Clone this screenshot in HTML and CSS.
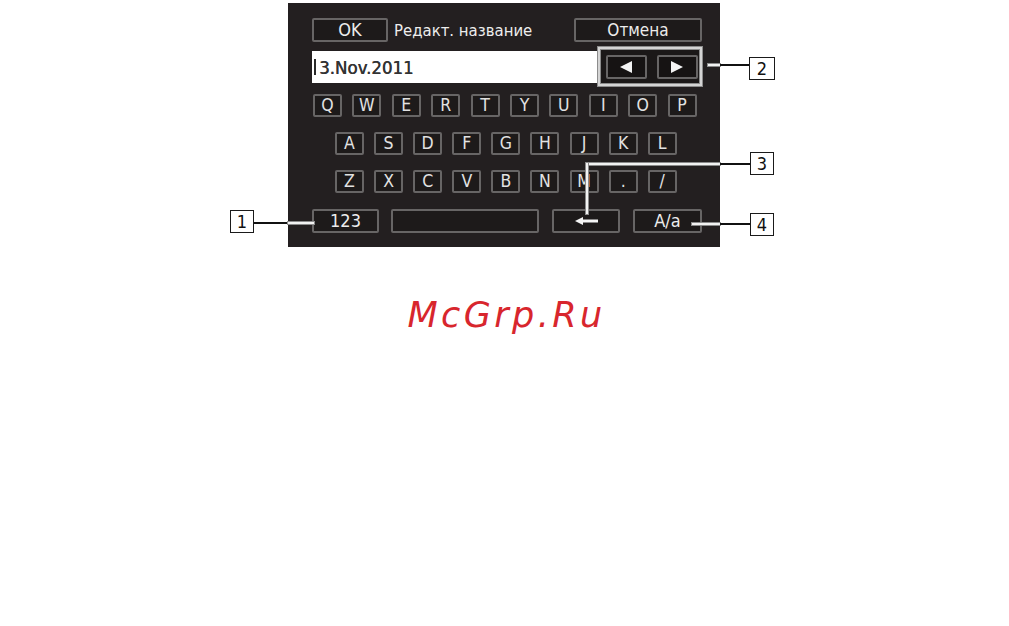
FILE: index.html
```html
<!DOCTYPE html>
<html lang="ru">
<head>
<meta charset="utf-8">
<title>Редакт. название</title>
<link rel="stylesheet" href="styles.css">
</head>
<body>
<div class="stage">
  <div class="panel">
    <div class="topbar">
      <div class="btn ok">OK</div>
      <div class="title">Редакт. название</div>
      <div class="btn cancel">Отмена</div>
    </div>
    <div class="inputrow">
      <div class="field"><span class="cursor"></span>3.Nov.2011</div>
      <div class="arrows">
        <div class="abtn"><svg width="12" height="12" viewBox="0 0 12 12"><polygon points="12,0 12,12 0,6" fill="#f4f4f4"/></svg></div>
        <div class="abtn"><svg width="12" height="12" viewBox="0 0 12 12"><polygon points="0,0 0,12 12,6" fill="#f4f4f4"/></svg></div>
      </div>
    </div>
    <div class="keys row1">
      <div class="key">Q</div><div class="key">W</div><div class="key">E</div><div class="key">R</div><div class="key">T</div><div class="key">Y</div><div class="key">U</div><div class="key">I</div><div class="key">O</div><div class="key">P</div>
    </div>
    <div class="keys row2">
      <div class="key">A</div><div class="key">S</div><div class="key">D</div><div class="key">F</div><div class="key">G</div><div class="key">H</div><div class="key">J</div><div class="key">K</div><div class="key">L</div>
    </div>
    <div class="keys row3">
      <div class="key">Z</div><div class="key">X</div><div class="key">C</div><div class="key">V</div><div class="key">B</div><div class="key">N</div><div class="key">M</div><div class="key">.</div><div class="key">/</div>
    </div>
    <div class="bottomrow">
      <div class="btn num">123</div>
      <div class="btn space"></div>
      <div class="btn back"><svg width="23" height="8" viewBox="0 0 23 8"><polygon points="0,4 8,0 8,2.5 23,2.5 23,5.5 8,5.5 8,8" fill="#f4f4f4"/></svg></div>
      <div class="btn caps">A/a</div>
    </div>
  </div>

  <div class="lead dark l1"></div>
  <div class="lead light l1in"></div>
  <div class="num-box n1">1</div>

  <div class="lead light l2in"></div>
  <div class="lead dark l2"></div>
  <div class="num-box n2">2</div>

  <div class="lead light l3in"></div>
  <div class="lead light l3v"></div>
  <div class="lead dark l3"></div>
  <div class="num-box n3">3</div>

  <div class="lead light l4in"></div>
  <div class="lead dark l4"></div>
  <div class="num-box n4">4</div>
</div>
<div class="brand">McGrp.Ru</div>
</body>
</html>
```

FILE: styles.css
```css
html, body {
  margin: 0;
  padding: 0;
  background: #ffffff;
}

body {
  width: 1009px;
  height: 626px;
  overflow: hidden;
  font-family: "Liberation Sans Narrow", "DejaVu Sans Condensed", "Liberation Sans", sans-serif;
}

.stage {
  position: relative;
  padding-top: 3px;
}

.panel {
  margin-left: 288px;
  width: 432px;
  height: 244px;
  box-sizing: border-box;
  background: #231f20;
  padding: 15px 18px 0 24px;
  display: flex;
  flex-direction: column;
  color: #e6e6e6;
}

.topbar {
  display: flex;
  align-items: center;
  height: 24px;
}

.btn {
  box-sizing: border-box;
  height: 24px;
  border: 2px solid #676565;
  border-radius: 2px;
  background: #1d1a1a;
  color: #ececec;
  display: flex;
  align-items: center;
  justify-content: center;
  font-size: 17px;
  line-height: 1;
}

.ok {
  width: 76px;
  font-size: 18px;
}

.title {
  flex: 1;
  margin-left: 6px;
  font-size: 16.6px;
  color: #ededed;
  white-space: nowrap;
}

.cancel {
  width: 128px;
}

.inputrow {
  display: flex;
  align-items: flex-start;
  margin-top: 5px;
  height: 39px;
}

.field {
  margin-top: 4px;
  width: 290px;
  height: 32px;
  box-sizing: border-box;
  background: #ffffff;
  display: flex;
  align-items: center;
  padding-left: 2px;
  font-size: 18.5px;
  font-weight: normal;
  color: #333333;
  text-shadow: 0.4px 0 0 #333333;
}

.cursor {
  display: inline-block;
  width: 2px;
  height: 16px;
  background: #2a2a2a;
  margin-right: 3px;
}

.arrows {
  box-sizing: border-box;
  width: 106px;
  height: 39px;
  border: 2px solid #d4d4d4;
  box-shadow: 0 0 0 1px #8c8c8c, inset 0 0 0 1px #8c8c8c;
  background: #1b1818;
  display: flex;
  align-items: center;
  gap: 10px;
  padding-left: 6px;
}

.abtn {
  box-sizing: border-box;
  width: 41px;
  height: 24px;
  border: 2px solid #676565;
  border-radius: 2px;
  background: #161313;
  display: flex;
  align-items: center;
  justify-content: center;
}

.keys {
  display: flex;
  height: 23px;
}

.row1 {
  margin-top: 8px;
  margin-left: 1px;
  gap: 10.4px;
}

.row2 {
  margin-top: 15px;
  margin-left: 23px;
  gap: 10.1px;
}

.row3 {
  margin-top: 15px;
  margin-left: 23px;
  gap: 10.1px;
}

.key {
  box-sizing: border-box;
  width: 29px;
  height: 23px;
  border: 2px solid #676565;
  border-radius: 2px;
  background: #1d1a1a;
  color: #e2e2e2;
  display: flex;
  align-items: center;
  justify-content: center;
  font-size: 17.5px;
  line-height: 1;
}

.bottomrow {
  display: flex;
  margin-top: 16px;
  height: 24px;
}

.num {
  width: 67px;
  font-size: 18px;
}

.space {
  width: 148px;
  margin-left: 12px;
}

.back {
  width: 68px;
  margin-left: 13px;
}

.caps {
  width: 69px;
  margin-left: 13px;
  font-size: 18px;
}

/* callout annotations */
.lead {
  position: absolute;
}

.lead.dark {
  background: #111111;
  height: 2px;
}

.lead.light {
  background: #f2f2f2;
  box-shadow: 0 0 0 1px #8a8a8a;
}

.l1 { left: 254px; top: 222px; width: 34px; }
.l1in { left: 288px; top: 222px; width: 26px; height: 2px; }

.l2in { left: 708px; top: 64px; width: 12px; height: 2px; }
.l2 { left: 720px; top: 64px; width: 30px; }

.l3in { left: 586px; top: 163px; width: 134px; height: 2px; }
.l3v { left: 586px; top: 163px; width: 2px; height: 51px; }
.l3 { left: 720px; top: 163px; width: 30px; }

.l4in { left: 692px; top: 223px; width: 28px; height: 2px; }
.l4 { left: 720px; top: 223px; width: 30px; }

.num-box {
  position: absolute;
  box-sizing: border-box;
  width: 24px;
  height: 23px;
  border: 1px solid #1a1a1a;
  background: #ffffff;
  color: #111111;
  font-size: 18px;
  display: flex;
  align-items: center;
  justify-content: center;
  line-height: 1;
}

.n1 { left: 230px; top: 210px; }
.n2 { left: 749px; top: 57px; width: 26px; }
.n3 { left: 750px; top: 152px; }
.n4 { left: 750px; top: 213px; }

.brand {
  margin-top: 48px;
  text-align: center;
  font-family: "DejaVu Sans", Verdana, sans-serif;
  font-style: oblique;
  font-size: 35px;
  line-height: 40px;
  letter-spacing: 3.4px;
  padding-left: 4px;
  color: #d8262d;
}
```
